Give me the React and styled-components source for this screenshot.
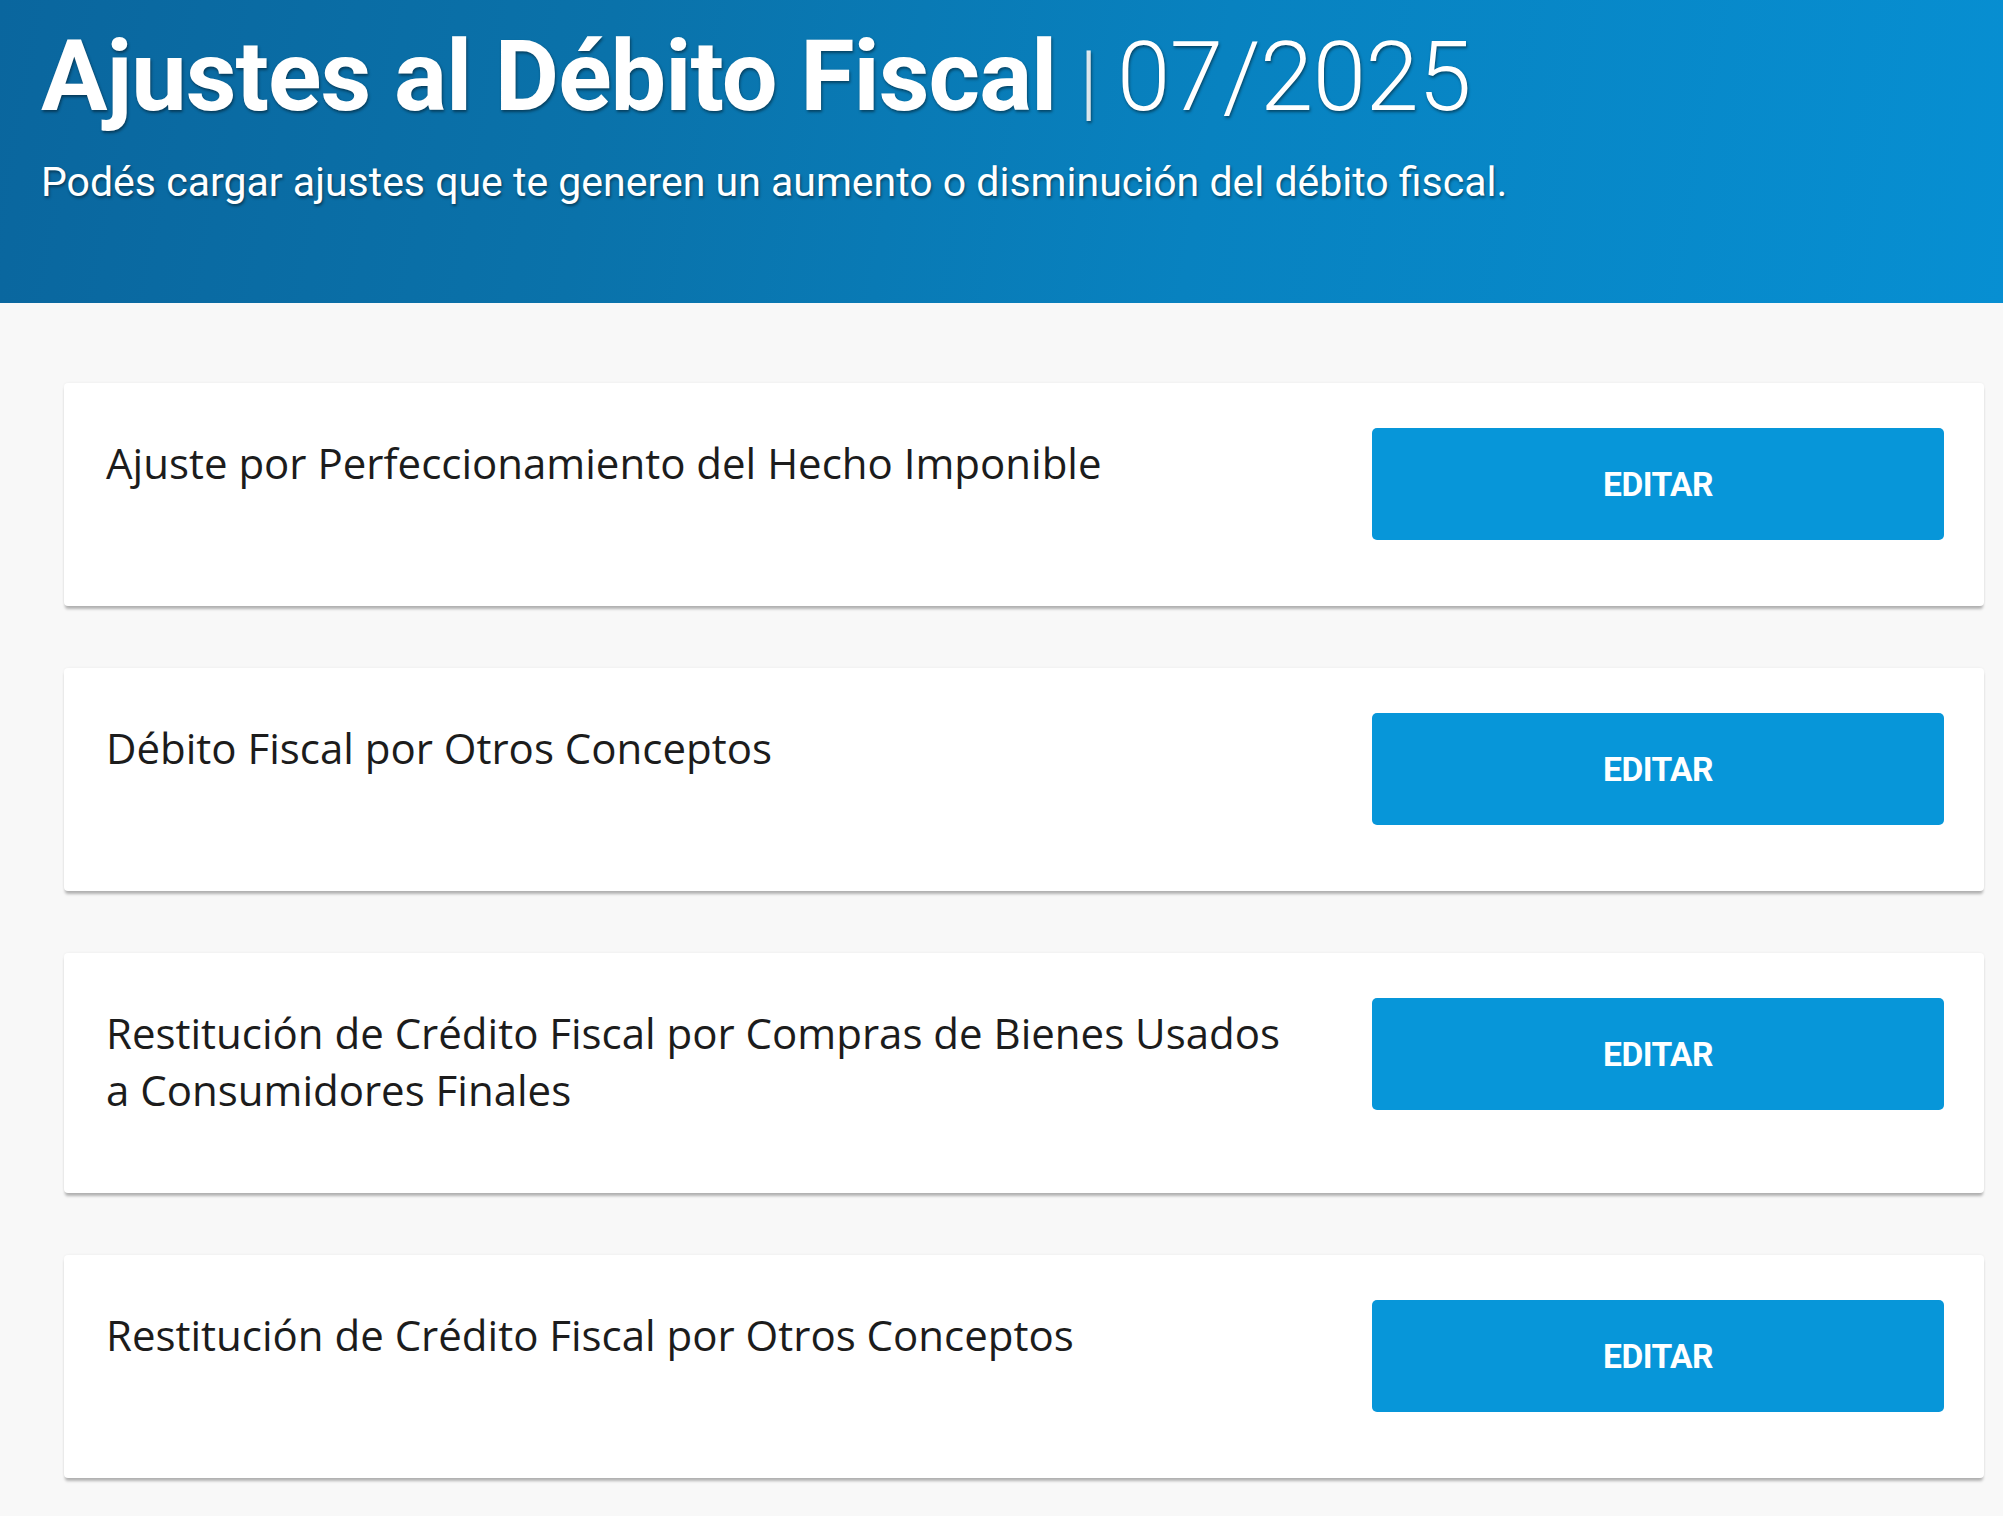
import React from 'react'
import styled, { createGlobalStyle } from 'styled-components'

const GlobalStyle = createGlobalStyle`
  html, body {
    margin: 0;
    padding: 0;
    background: #f8f8f8;
  }
  body {
    font-family: Roboto, 'Liberation Sans', sans-serif;
  }
`

const items = [
  'Ajuste por Perfeccionamiento del Hecho Imponible',
  'Débito Fiscal por Otros Conceptos',
  'Restitución de Crédito Fiscal por Compras de Bienes Usados a Consumidores Finales',
  'Restitución de Crédito Fiscal por Otros Conceptos',
]

const App = () => {
  return (
    <Page>
      <GlobalStyle />
      <Header>
        <Title>
          Ajustes al Débito Fiscal
          <Separator>|</Separator>
          <Period>07/2025</Period>
        </Title>
        <Subtitle>
          Podés cargar ajustes que te generen un aumento o disminución del débito fiscal.
        </Subtitle>
      </Header>
      <List>
        {items.map((label) => (
          <Card key={label}>
            <Label>{label}</Label>
            <EditButton type='button'>EDITAR</EditButton>
          </Card>
        ))}
      </List>
    </Page>
  )
}

export default App

const Page = styled.div`
  min-height: 100vh;
  background: #f8f8f8;
`

const Header = styled.header`
  height: 303px;
  box-sizing: border-box;
  padding: 21px 41px 0;
  background: linear-gradient(100deg, #0a669e 0%, #0a72aa 30%, #0882c0 60%, #078fd2 100%);
  color: #fff;
  text-shadow: 1px 2px 3px rgba(0, 0, 0, 0.45);
`

const Title = styled.h1`
  margin: 0;
  display: flex;
  align-items: baseline;
  font-family: Roboto, 'Liberation Sans', sans-serif;
  font-weight: 700;
  font-size: 99px;
  line-height: 110px;
  letter-spacing: -1px;
`

const Separator = styled.span`
  font-weight: 300;
  font-size: 84px;
  margin: 0 20px 0 23px;
  color: rgba(255, 255, 255, 0.85);
`

const Period = styled.span`
  font-weight: 300;
  font-size: 96px;
  letter-spacing: -0.5px;
`

const Subtitle = styled.p`
  margin: 21px 0 0;
  font-family: Roboto, 'Liberation Sans', sans-serif;
  font-size: 41px;
  line-height: 48px;
  letter-spacing: 0;
`

const List = styled.main`
  display: flex;
  flex-direction: column;
  gap: 62px;
  padding: 80px 19px 40px 64px;
`

const Card = styled.section`
  display: flex;
  align-items: flex-start;
  gap: 76px;
  padding: 45px 40px 66px 42px;
  background: #fff;
  border-radius: 4px;
  box-shadow: 0 4px 3px -1px rgba(0, 0, 0, 0.28), 0 0 3px rgba(0, 0, 0, 0.06);
`

const Label = styled.div`
  flex: 1;
  padding: 6px 0 9px;
  font-family: 'Open Sans', 'Noto Sans', sans-serif;
  font-size: 42px;
  line-height: 57px;
  color: #1c1c1c;
`

const EditButton = styled.button`
  flex: 0 0 572px;
  height: 112px;
  border: none;
  border-radius: 5px;
  background: #0796d9;
  color: #fff;
  font-family: Roboto, 'Liberation Sans', sans-serif;
  font-weight: 700;
  font-size: 33.5px;
  letter-spacing: -0.5px;
  cursor: pointer;
`
